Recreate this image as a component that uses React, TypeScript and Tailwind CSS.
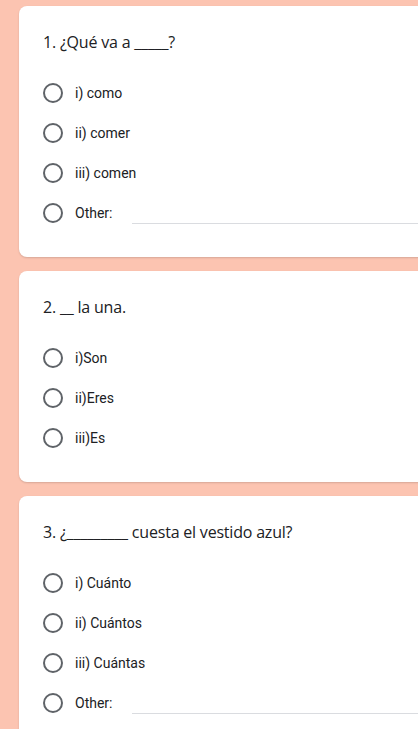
import React from "react"

type Question = {
  title: string
  options: string[]
  other?: boolean
}

const QUESTIONS: Question[] = [
  { title: "1. ¿Qué va a _____?", options: ["i) como", "ii) comer", "iii) comen"], other: true },
  { title: "2. __ la una.", options: ["i)Son", "ii)Eres", "iii)Es"] },
  { title: "3. ¿_________ cuesta el vestido azul?", options: ["i) Cuánto", "ii) Cuántos", "iii) Cuántas"], other: true },
]

function Radio() {
  return <div className="w-5 h-5 rounded-full border-2 border-[#5f6368] flex-shrink-0" />
}

function OptionRow({ label, other }: { label: string; other?: boolean }) {
  return (
    <div className="flex items-center h-10">
      <Radio />
      <span className="ml-3 text-[14px] text-[#202124] font-['Roboto',sans-serif]">{label}</span>
      {other && <div className="flex-1 ml-5 mt-5 border-b border-[#dadce0]" />}
    </div>
  )
}

function QuestionCard({ q }: { q: Question }) {
  return (
    <div className="bg-white rounded-l-lg -mr-4 pl-6 pr-4 pt-6 pb-6 shadow-[0_1px_2px_rgba(0,0,0,0.15)]">
      <div className="text-[16px] leading-6 text-[#202124] font-['Open_Sans',sans-serif] tracking-[-0.2px]">{q.title}</div>
      <div className="mt-[19px]">
        {q.options.map((o) => (
          <OptionRow key={o} label={o} />
        ))}
        {q.other && <OptionRow label="Other:" other />}
      </div>
    </div>
  )
}

export default function App() {
  return (
    <div className="h-[729px] overflow-hidden bg-[#fcc4b1] pl-[19px] pt-[6px]">
      <div className="flex flex-col gap-[14px]">
        {QUESTIONS.map((q, i) => (
          <QuestionCard key={i} q={q} />
        ))}
      </div>
    </div>
  )
}
